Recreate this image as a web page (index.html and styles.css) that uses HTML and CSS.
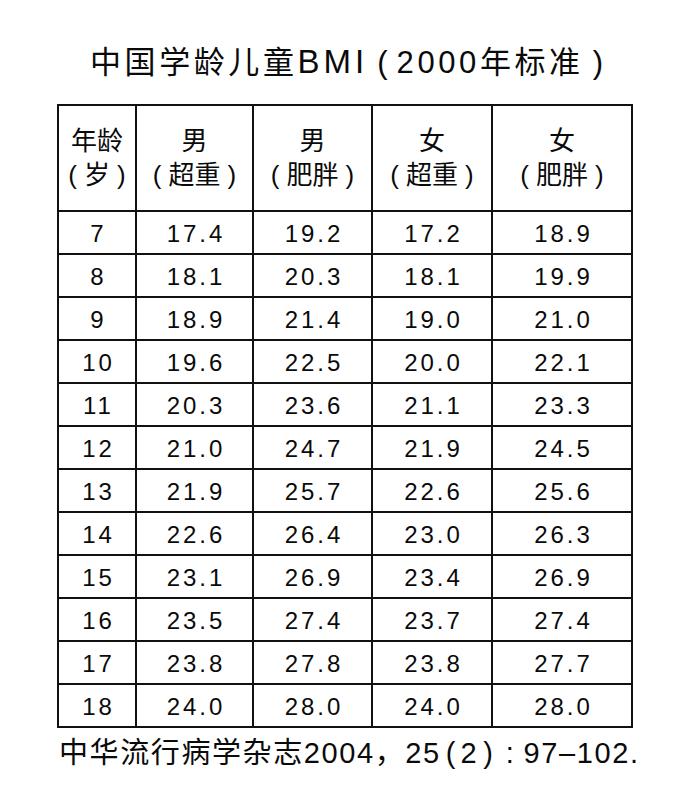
FILE: index.html
```html
<!DOCTYPE html>
<html lang="zh-CN">
<head>
<meta charset="utf-8">
<title>中国学龄儿童BMI</title>
<link rel="stylesheet" href="styles.css">
</head>
<body>
<div class="page">
  <h1 class="title">中国学龄儿童<span class="lat">BMI</span><span class="par">(</span>2000年标准<span class="par">)</span></h1>
  <table class="bmi">
    <colgroup>
      <col class="c1"><col class="c2"><col class="c3"><col class="c4"><col class="c5">
    </colgroup>
    <thead>
      <tr>
        <th><span class="hl">年龄</span><span class="hl"><span class="par">(</span>岁<span class="par">)</span></span></th>
        <th><span class="hl">男</span><span class="hl"><span class="par">(</span>超重<span class="par">)</span></span></th>
        <th><span class="hl">男</span><span class="hl"><span class="par">(</span>肥胖<span class="par">)</span></span></th>
        <th><span class="hl">女</span><span class="hl"><span class="par">(</span>超重<span class="par">)</span></span></th>
        <th><span class="hl">女</span><span class="hl"><span class="par">(</span>肥胖<span class="par">)</span></span></th>
      </tr>
    </thead>
    <tbody>
      <tr><td>7</td><td>17.4</td><td>19.2</td><td>17.2</td><td>18.9</td></tr>
      <tr><td>8</td><td>18.1</td><td>20.3</td><td>18.1</td><td>19.9</td></tr>
      <tr><td>9</td><td>18.9</td><td>21.4</td><td>19.0</td><td>21.0</td></tr>
      <tr><td>10</td><td>19.6</td><td>22.5</td><td>20.0</td><td>22.1</td></tr>
      <tr><td>11</td><td>20.3</td><td>23.6</td><td>21.1</td><td>23.3</td></tr>
      <tr><td>12</td><td>21.0</td><td>24.7</td><td>21.9</td><td>24.5</td></tr>
      <tr><td>13</td><td>21.9</td><td>25.7</td><td>22.6</td><td>25.6</td></tr>
      <tr><td>14</td><td>22.6</td><td>26.4</td><td>23.0</td><td>26.3</td></tr>
      <tr><td>15</td><td>23.1</td><td>26.9</td><td>23.4</td><td>26.9</td></tr>
      <tr><td>16</td><td>23.5</td><td>27.4</td><td>23.7</td><td>27.4</td></tr>
      <tr><td>17</td><td>23.8</td><td>27.8</td><td>23.8</td><td>27.7</td></tr>
      <tr><td>18</td><td>24.0</td><td>28.0</td><td>24.0</td><td>28.0</td></tr>
    </tbody>
  </table>
  <p class="source">中华流行病学杂志2004，25<span class="par sm">(</span>2<span class="par sm">)</span><span class="colon">:</span>97–102.</p>
</div>
</body>
</html>
```
FILE: styles.css
```css
html, body {
  margin: 0;
  padding: 0;
  background: #ffffff;
}
.page {
  width: 687px;
  height: 800px;
  box-sizing: border-box;
  padding: 41px 0 0 57px;
  font-family: "Liberation Sans", "Noto Sans CJK SC", sans-serif;
  color: #0a0a0a;
}
.title {
  margin: 0;
  width: 588px;
  text-align: center;
  font-weight: normal;
  font-size: 31px;
  line-height: 42px;
  letter-spacing: 3.6px;
  white-space: nowrap;
}
.lat {
  letter-spacing: 4px;
  font-size: 33px;
}
.par {
  font-family: "Liberation Sans", sans-serif;
  font-weight: normal;
  margin: 0 9px;
  letter-spacing: 0;
}
.bmi {
  margin-top: 20px;
  border-collapse: collapse;
  width: 574px;
  table-layout: fixed;
}
.c1 { width: 78px; }
.c2 { width: 117px; }
.c3 { width: 119px; }
.c4 { width: 120px; }
.c5 { width: 140px; }
.bmi th, .bmi td {
  border: 2px solid #111111;
  text-align: center;
  padding: 0;
  font-weight: normal;
}
.bmi th {
  height: 104px;
  font-size: 26px;
  line-height: 34px;
}
.bmi th .par {
  margin: 0 7px;
}
.hl {
  display: block;
  white-space: nowrap;
}
.bmi td {
  height: 43px;
  font-size: 24px;
  letter-spacing: 3px;
  padding: 3px 0 0 3px;
  box-sizing: border-box;
}
.source {
  margin: 8px 0 0 2px;
  font-size: 29px;
  line-height: 34px;
  letter-spacing: 1.6px;
  white-space: nowrap;
}
.par.sm {
  margin: 0 5px;
}
.colon {
  margin: 0 8px;
}
```
